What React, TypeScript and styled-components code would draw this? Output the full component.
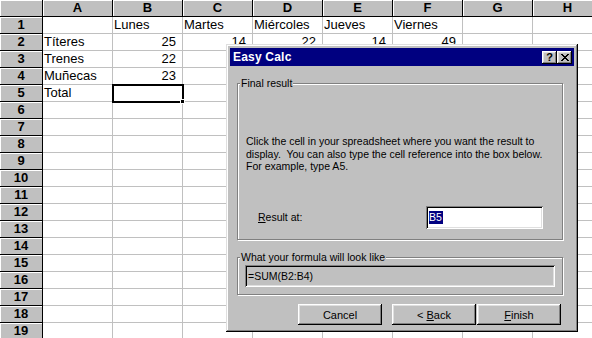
import React from "react";
import styled, { createGlobalStyle } from "styled-components";

const GlobalStyle = createGlobalStyle`
  html, body {
    margin: 0;
    padding: 0;
    background: #fff;
  }
  body {
    font-family: "Liberation Sans", Arial, sans-serif;
    overflow: hidden;
  }
`;

const Screen = styled.div`
  position: relative;
  width: 592px;
  height: 338px;
  overflow: hidden;
  background: #fff;
  color: #000;
`;

const Sheet = styled.div`
  display: grid;
  grid-template-columns: 43px repeat(8, 70px);
  grid-auto-rows: 17px;
  font-size: 13px;
`;

const HeadCell = styled.div`
  box-sizing: border-box;
  background: #c0c0c0;
  border-right: 1px solid #000;
  border-bottom: 1px solid #000;
  box-shadow: inset 1px 1px #fff;
  font-weight: bold;
  text-align: center;
  line-height: 16px;
`;

const Cell = styled.div<{ $num?: boolean; $selected?: boolean }>`
  position: relative;
  box-sizing: border-box;
  border-right: 1px solid #c0c0c0;
  border-bottom: 1px solid #c0c0c0;
  padding: ${(p) => (p.$num ? "0 6px 0 0" : "0 0 0 1px")};
  text-align: ${(p) => (p.$num ? "right" : "left")};
  line-height: 16px;
  white-space: nowrap;
  ${(p) =>
    p.$selected &&
    `
    z-index: 1;
    outline: 2px solid #000;
    outline-offset: -1px;
    &::after {
      content: "";
      position: absolute;
      right: -3px;
      bottom: -3px;
      width: 5px;
      height: 5px;
      background: #000;
      border: 1px solid #fff;
      box-sizing: border-box;
    }
  `}
`;

const Dialog = styled.div`
  position: absolute;
  left: 226px;
  top: 44px;
  width: 352px;
  height: 288px;
  box-sizing: border-box;
  padding: 4px;
  background: #c0c0c0;
  box-shadow: inset -1px -1px #000, inset 1px 1px #dfdfdf,
    inset -2px -2px #808080, inset 2px 2px #fff;
  display: flex;
  flex-direction: column;
  font-size: 10.5px;
`;

const TitleBar = styled.div`
  height: 18px;
  flex: none;
  background: #000080;
  color: #fff;
  display: flex;
  align-items: center;
  justify-content: space-between;
  padding: 0 2px 0 3px;
`;

const Title = styled.span`
  font-weight: bold;
  font-size: 12px;
  letter-spacing: 0.2px;
`;

const CaptionButtons = styled.div`
  display: flex;
`;

const CaptionButton = styled.div`
  width: 15px;
  height: 13px;
  box-sizing: border-box;
  background: #c0c0c0;
  color: #000;
  box-shadow: inset -1px -1px #000, inset 1px 1px #fff,
    inset -2px -2px #808080, inset 2px 2px #dfdfdf;
  display: flex;
  align-items: center;
  justify-content: center;
  font-weight: bold;
  font-size: 11px;
  line-height: 11px;
`;

const Body = styled.div`
  display: flex;
  flex-direction: column;
  padding: 0 11px 0 7px;
`;

const GroupBox = styled.div<{ $height: number }>`
  position: relative;
  box-sizing: border-box;
  height: ${(p) => p.$height}px;
  margin-top: 17px;
  border: 1px solid #808080;
  box-shadow: inset 1px 1px #fff, 1px 1px #fff;
`;

const GroupCaption = styled.span`
  position: absolute;
  top: -7px;
  left: 2px;
  padding: 0 1px;
  background: #c0c0c0;
  line-height: 13px;
`;

const Description = styled.p`
  margin: 51px 0 0 8px;
  line-height: 12.5px;
`;

const ResultRow = styled.div`
  display: flex;
  align-items: center;
  margin-top: 33px;
  padding-left: 20px;
`;

const FieldLabel = styled.label`
  width: 168px;
`;

const Underline = styled.span`
  text-decoration: underline;
`;

const TextInput = styled.div`
  width: 117px;
  height: 23px;
  box-sizing: border-box;
  background: #fff;
  box-shadow: inset 1px 1px #808080, inset -1px -1px #fff,
    inset 2px 2px #000, inset -2px -2px #dfdfdf;
  padding: 4px 3px;
  line-height: 14px;
`;

const Selection = styled.span`
  background: #000080;
  color: #fff;
  padding: 0 1px 1px 0;
`;

const FormulaField = styled.div`
  margin: 7px 0 0 7px;
  width: 310px;
  height: 22px;
  box-sizing: border-box;
  background: #c0c0c0;
  box-shadow: inset 1px 1px #808080, inset -1px -1px #fff,
    inset 2px 2px #000, inset -2px -2px #dfdfdf;
  padding: 4px 3px;
  line-height: 14px;
`;

const ButtonRow = styled.div`
  display: flex;
  justify-content: flex-end;
  margin-top: 9px;
  padding-right: 2px;
`;

const Button = styled.div<{ $gap?: number }>`
  width: 84px;
  height: 21px;
  box-sizing: border-box;
  margin-right: ${(p) => p.$gap ?? 0}px;
  background: #c0c0c0;
  box-shadow: inset -1px -1px #000, inset 1px 1px #fff,
    inset -2px -2px #808080, inset 2px 2px #dfdfdf;
  display: flex;
  align-items: center;
  justify-content: center;
  font-size: 11px;
`;

const columns = ["A", "B", "C", "D", "E", "F", "G", "H"];

type Value = string | number | undefined;

const data: Value[][] = [
  [undefined, "Lunes", "Martes", "Miércoles", "Jueves", "Viernes"],
  ["Títeres", 25, 14, 22, 14, 49],
  ["Trenes", 22],
  ["Muñecas", 23],
  ["Total"],
];

function CloseGlyph() {
  return (
    <svg width="8" height="7" viewBox="0 0 8 7" shapeRendering="crispEdges">
      <path
        d="M0 0h2v1h-2zM6 0h2v1h-2zM1 1h2v1h-2zM5 1h2v1h-2zM2 2h4v1h-4zM3 3h2v1h-2zM2 4h4v1h-4zM1 5h2v1h-2zM5 5h2v1h-2zM0 6h2v1h-2zM6 6h2v1h-2z"
        fill="#000"
      />
    </svg>
  );
}

function Spreadsheet() {
  const rows = Array.from({ length: 19 }, (_, i) => i + 1);
  return (
    <Sheet>
      <HeadCell />
      {columns.map((c) => (
        <HeadCell key={c}>{c}</HeadCell>
      ))}
      {rows.map((r) => (
        <React.Fragment key={r}>
          <HeadCell>{r}</HeadCell>
          {columns.map((c, ci) => {
            const v = data[r - 1]?.[ci];
            return (
              <Cell
                key={c}
                $num={typeof v === "number"}
                $selected={r === 5 && c === "B"}
              >
                {v}
              </Cell>
            );
          })}
        </React.Fragment>
      ))}
    </Sheet>
  );
}

export default function App() {
  return (
    <Screen>
      <GlobalStyle />
      <Spreadsheet />
      <Dialog>
        <TitleBar>
          <Title>Easy Calc</Title>
          <CaptionButtons>
            <CaptionButton>?</CaptionButton>
            <CaptionButton>
              <CloseGlyph />
            </CaptionButton>
          </CaptionButtons>
        </TitleBar>
        <Body>
          <GroupBox $height={157}>
            <GroupCaption>Final result</GroupCaption>
            <Description>
              Click the cell in your spreadsheet where you want the result to
              <br />
              display.&nbsp; You can also type the cell reference into the box
              below.
              <br />
              For example, type A5.
            </Description>
            <ResultRow>
              <FieldLabel>
                <Underline>R</Underline>esult at:
              </FieldLabel>
              <TextInput>
                <Selection>B5</Selection>
              </TextInput>
            </ResultRow>
          </GroupBox>
          <GroupBox $height={38}>
            <GroupCaption>What your formula will look like</GroupCaption>
            <FormulaField>=SUM(B2:B4)</FormulaField>
          </GroupBox>
          <ButtonRow>
            <Button $gap={10}>Cancel</Button>
            <Button $gap={1}>
              &lt;&nbsp;<Underline>B</Underline>ack
            </Button>
            <Button>
              <Underline>F</Underline>inish
            </Button>
          </ButtonRow>
        </Body>
      </Dialog>
    </Screen>
  );
}
